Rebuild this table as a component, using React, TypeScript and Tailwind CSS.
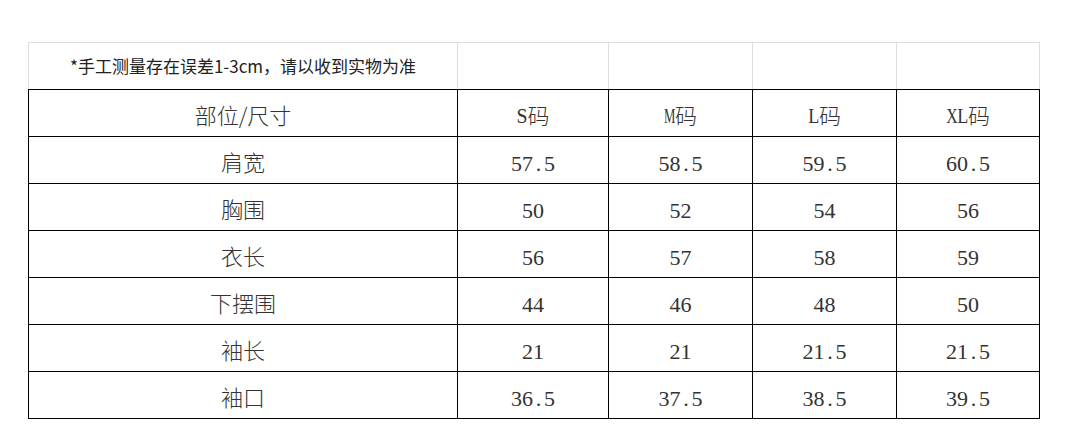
const SIZES = ["S", "M", "L", "XL"];

const ROWS: [string, string[]][] = [
  ["肩宽", ["57.5", "58.5", "59.5", "60.5"]],
  ["胸围", ["50", "52", "54", "56"]],
  ["衣长", ["56", "57", "58", "59"]],
  ["下摆围", ["44", "46", "48", "50"]],
  ["袖长", ["21", "21", "21.5", "21.5"]],
  ["袖口", ["36.5", "37.5", "38.5", "39.5"]],
];

const WIDTHS = ["w-[429px]", "w-[151px]", "w-[144px]", "w-[144px]", "w-[143px]"];

const cjk = "font-['Noto_Sans_CJK_SC',sans-serif] font-light text-[22px]";
const serif = "font-['Liberation_Serif',serif] text-[22px]";

// letters are narrowed so they fit a half-width cell like SimSun's
const SQUEEZE: Record<string, string> = {
  M: "scale-x-[0.58]",
  X: "scale-x-[0.72]",
  L: "scale-x-[0.82]",
  S: "scale-x-[0.9]",
};

// SimSun-style half-width cells: every latin character takes half an em
function HalfWidth({ text }: { text: string }) {
  return (
    <span className={`flex ${serif}`}>
      {text.split("").map((c, i) => (
        <span key={i} className="flex w-[11px] justify-center">
          <span className={`inline-block ${SQUEEZE[c] ?? ""}`}>{c}</span>
        </span>
      ))}
    </span>
  );
}

export default function App() {
  return (
    <div className="min-h-screen bg-white pl-[28px] pt-[42px] text-[#333]">
      <div className="w-[1012px]">
        {/* note row, light grey lines */}
        <div className="flex h-[47px] border-t border-r border-[#dcdcdc]">
          <div className="flex w-[429px] items-center justify-center border-l border-[#dcdcdc] font-['Noto_Sans_CJK_SC',sans-serif] text-[17px] text-[#222]">
            *手工测量存在误差1-3cm，请以收到实物为准
          </div>
          {WIDTHS.slice(1).map((w, i) => (
            <div key={i} className={`${w} border-l border-[#dcdcdc]`} />
          ))}
        </div>

        <div className="border-r border-b border-black">
          <div className="flex h-[47px] border-t border-black">
            <div className={`flex w-[429px] items-center justify-center border-l border-black pt-[2px] ${cjk}`}>
              部位/尺寸
            </div>
            {SIZES.map((s, i) => (
              <div
                key={s}
                className={`flex ${WIDTHS[i + 1]} items-center justify-center border-l border-black pt-[4px]`}
              >
                <HalfWidth text={s} />
                <span className={`${cjk} -mt-[2px]`}>码</span>
              </div>
            ))}
          </div>

          {ROWS.map(([name, vals]) => (
            <div key={name} className="flex h-[47px] border-t border-black">
              <div className={`flex w-[429px] items-center justify-center border-l border-black pt-[2px] ${cjk}`}>
                {name}
              </div>
              {vals.map((v, i) => (
                <div
                  key={i}
                  className={`flex ${WIDTHS[i + 1]} items-center justify-center border-l border-black pt-[6px]`}
                >
                  <HalfWidth text={v} />
                </div>
              ))}
            </div>
          ))}
        </div>
      </div>
    </div>
  );
}
